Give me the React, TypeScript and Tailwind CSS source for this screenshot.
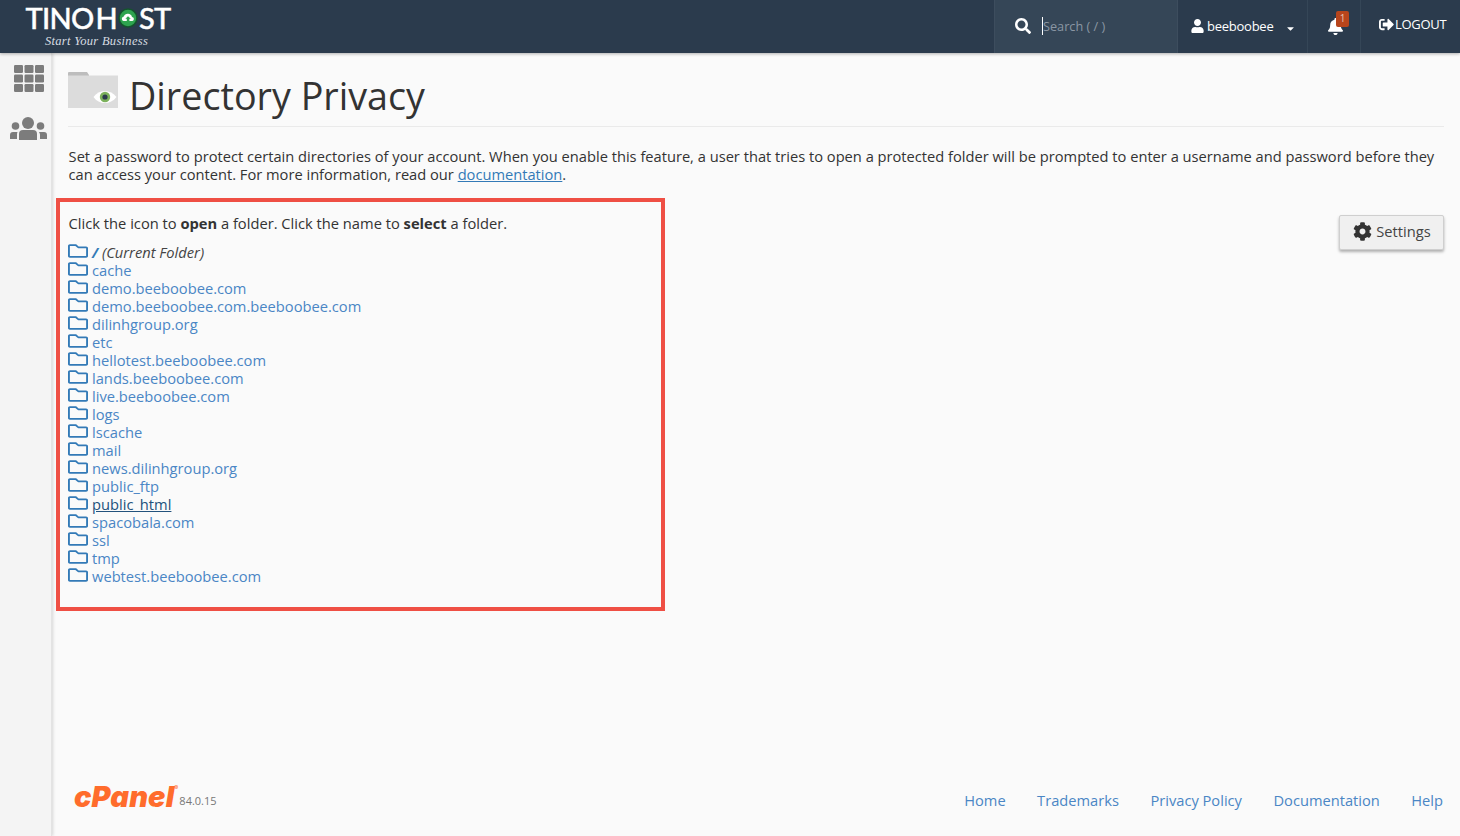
import { FaSearch, FaUser, FaBell, FaSignOutAlt, FaCog, FaRegFolder, FaCaretDown } from 'react-icons/fa';

const FOLDERS = [
  'cache', 'demo.beeboobee.com', 'demo.beeboobee.com.beeboobee.com', 'dilinhgroup.org', 'etc',
  'hellotest.beeboobee.com', 'lands.beeboobee.com', 'live.beeboobee.com', 'logs', 'lscache', 'mail',
  'news.dilinhgroup.org', 'public_ftp', 'public_html', 'spacobala.com', 'ssl', 'tmp', 'webtest.beeboobee.com',
];

const FOOTER_LINKS = ['Home', 'Trademarks', 'Privacy Policy', 'Documentation', 'Help'];

function Logo() {
  return (
    <div className="ml-[25px] flex flex-col items-center w-[146px] pt-[3px]">
      <div className="flex items-center h-[29px] text-white text-[29px] leading-none font-['Lato',sans-serif] font-medium tracking-[-0.7px] [-webkit-text-stroke:0.4px_white]">
        TINO<span className="ml-[2px]">H</span>
        <svg viewBox="0 0 20 20" className="mx-[1px] w-[20px] h-[20px] shrink-0">
          <circle cx="10" cy="10" r="9" fill="#2ea44f" stroke="#14532d" strokeWidth="1.6" />
          <path d="M5.5 13a2.3 2.3 0 0 1 .3-4.5 4.3 4.3 0 0 1 8.2.4 2.1 2.1 0 0 1 .4 4.1h-3v-2.2h1.4L10 8.2l-2.6 2.6h1.4V13z" fill="#fff" />
        </svg>
        ST
      </div>
      <div className="mt-[2px] pr-[3px] text-[12.5px] leading-[14px] italic text-[#d8dde2] font-['Liberation_Serif',serif] tracking-[0.3px]">
        Start Your Business
      </div>
    </div>
  );
}

function PageIcon() {
  return (
    <svg viewBox="0 0 50 37" className="w-[50px] h-[37px] shrink-0">
      <path d="M0 2a1 1 0 0 1 1-1h18l2 3v3H0z" fill="#bdbdbd" />
      <rect x="0" y="4.5" width="50" height="32.5" fill="#dcdcdc" />
      <path d="M25.5 26c5.500-8 17-8 23 0-6 8-17.500 8-23 0z" fill="#fff" />
      <circle cx="37" cy="26" r="5.2" fill="#7cb15c" />
      <circle cx="37" cy="26" r="2.6" fill="#2b3b4d" />
    </svg>
  );
}

function GridIcon() {
  return (
    <svg viewBox="0 0 30 27" className="w-[30px] h-[27px]" fill="currentColor">
      {[0, 9.5, 19].map((y) =>
        [0, 10.5, 21].map((x) => <rect key={`${x}-${y}`} x={x} y={y} width="9" height="8" rx="1.2" />),
      )}
    </svg>
  );
}

function UsersIcon() {
  return (
    <svg viewBox="0 0 37 23" className="w-[37px] h-[23px]" fill="currentColor">
      <circle cx="18" cy="6" r="6" />
      <circle cx="5.5" cy="9" r="3.8" />
      <circle cx="30.5" cy="9" r="3.8" />
      <path d="M9 23v-6a4 4 0 0 1 4-4h10a4 4 0 0 1 4 4v6z" />
      <path d="M0 22v-4a3 3 0 0 1 3-3h4.5a6 6 0 0 0-.5 2.5V22z" />
      <path d="M37 22v-4a3 3 0 0 0-3-3h-5a6 6 0 0 1 1 2.5V22z" />
    </svg>
  );
}

function FolderIcon() {
  return <FaRegFolder preserveAspectRatio="none" className="w-[20px] h-[18px] text-[#337ab7] mr-[3px] -ml-[0.5px] -mt-[2px] shrink-0" />;
}

export default function App() {
  return (
    <div className="h-[836px] flex flex-col bg-[#fafafa] text-[#333] font-['Open_Sans',sans-serif] overflow-hidden">
      <header className="relative z-10 h-[53px] shrink-0 flex items-stretch bg-[#2b3b4d] text-white shadow-[0_1px_3px_rgba(0,0,0,0.3)]">
        <Logo />
        <div className="ml-auto w-[184px] flex items-center bg-[#354657] border-x border-[#3d4d5e] pl-[20px]">
          <FaSearch className="w-[16px] h-[16px] -mt-[1px]" />
          <span className="ml-[11px] -mt-[1px] border-l border-white h-[18px] leading-[18px] text-[12.7px] text-[#8a96a3] whitespace-nowrap">Search ( / )</span>
        </div>
        <div className="w-[130px] flex items-center pl-[12px] text-[13px] tracking-[-0.25px] border-r border-[#354657]">
          <FaUser className="w-[15px] h-[14px] -mt-[1px]" />
          <span className="ml-[2px]">beeboobee</span>
          <FaCaretDown className="ml-[12px] mt-[4px] w-[11px] h-[11px]" />
        </div>
        <div className="w-[53px] flex items-center border-r border-[#354657] pl-[19px]">
          <div className="relative">
            <FaBell className="w-[17px] h-[17px]" />
            <span className="absolute -top-[7px] left-[9px] w-[13px] h-[16px] rounded-[2px] bg-[#b8451c] text-[10px] leading-[14px] text-center text-[#e8c4b4]">1</span>
          </div>
        </div>
        <div className="w-[99px] flex items-center pl-[18px] pb-[4px] text-[13px] tracking-[-0.3px]">
          <FaSignOutAlt className="w-[15px] h-[15px]" />
          <span className="ml-[1px]">LOGOUT</span>
        </div>
      </header>

      <div className="flex-1 flex min-h-0">
        <aside className="w-[52px] shrink-0 bg-[#f4f4f4] border-r border-[#e3e3e3] shadow-[1px_0_3px_rgba(0,0,0,0.15)] flex flex-col items-center text-[#7c7c7c]">
          <div className="mt-[12px] ml-[6px]"><GridIcon /></div>
          <div className="mt-[25px] ml-[6px]"><UsersIcon /></div>
        </aside>

        <main className="flex-1 min-w-0 flex flex-col pl-[16px] pr-[16px]">
          <div className="h-[74px] shrink-0 flex items-start pt-[19px] border-b border-[#eaeaea]">
            <div className="-mt-[1px]"><PageIcon /></div>
            <h1 className="ml-[11px] text-[37.7px] leading-[48px] text-[#333]">Directory Privacy</h1>
          </div>

          <p className="mt-[20px] pl-[0.6px] text-[14.67px] leading-[18px] text-[#333]">
            Set a password to protect certain directories of your account. When you enable this feature, a user that tries to open a protected folder will be prompted to enter a username and password before they can access your content. For more information, read our{' '}
            <a className="text-[#337ab7] underline">documentation</a>.
          </p>

          <div className="mt-[15px] flex items-start justify-between">
            <section className="-ml-[12px] w-[609px] h-[413px] border-[4px] border-[#ef4f44] pl-[8px] pt-[12px] text-[14.7px]">
              <p className="pl-[0.6px] leading-[18px]">
                Click the icon to <b>open</b> a folder. Click the name to <b>select</b> a folder.
              </p>
              <ul className="mt-[11px] leading-[18px]">
                <li className="flex items-center h-[18px]">
                  <FolderIcon />
                  <i className="ml-[1.5px] text-[#444]"><b className="text-[#337ab7]">/</b> (Current Folder)</i>
                </li>
                {FOLDERS.map((name) => (
                  <li key={name} className="flex items-center h-[18px]">
                    <FolderIcon />
                    <a className={`ml-[1.5px] ${name === 'public_html' ? 'text-[#23527c] underline' : 'text-[#4a86c5]'}`}>{name}</a>
                  </li>
                ))}
              </ul>
            </section>
            <button className="mt-[17px] w-[105px] h-[35px] flex items-center justify-center pb-[3px] bg-[#f0f0f0] border border-[#cfcfcf] rounded-[2px] text-[14.7px] text-[#444] shadow-[0_2px_3px_rgba(0,0,0,0.3)]">
              <FaCog className="w-[19px] h-[19px] mr-[4px] ml-[1px] text-[#333]" />
              Settings
            </button>
          </div>

          <footer className="mt-auto h-[52px] shrink-0 flex items-start justify-between">
            <div className="flex items-start">
              <span className="relative ml-[6px] -mt-[2px] text-[29px] leading-[30px] font-['Inter',sans-serif] font-black italic text-[#ff6c2c] tracking-[0.1px]">
                cPanel
                <span className="absolute -right-[4px] top-[3px] text-[6px] leading-[6px] not-italic font-normal">®</span>
              </span>
              <span className="ml-[5px] mt-[9px] text-[11px] leading-[16px] text-[#777]">84.0.15</span>
            </div>
            <nav className="flex gap-[31.5px] text-[14.67px] leading-[20px] pt-[6px] pr-[1px] text-[#4a86c5]">
              {FOOTER_LINKS.map((l) => <a key={l}>{l}</a>)}
            </nav>
          </footer>
        </main>
      </div>
    </div>
  );
}
